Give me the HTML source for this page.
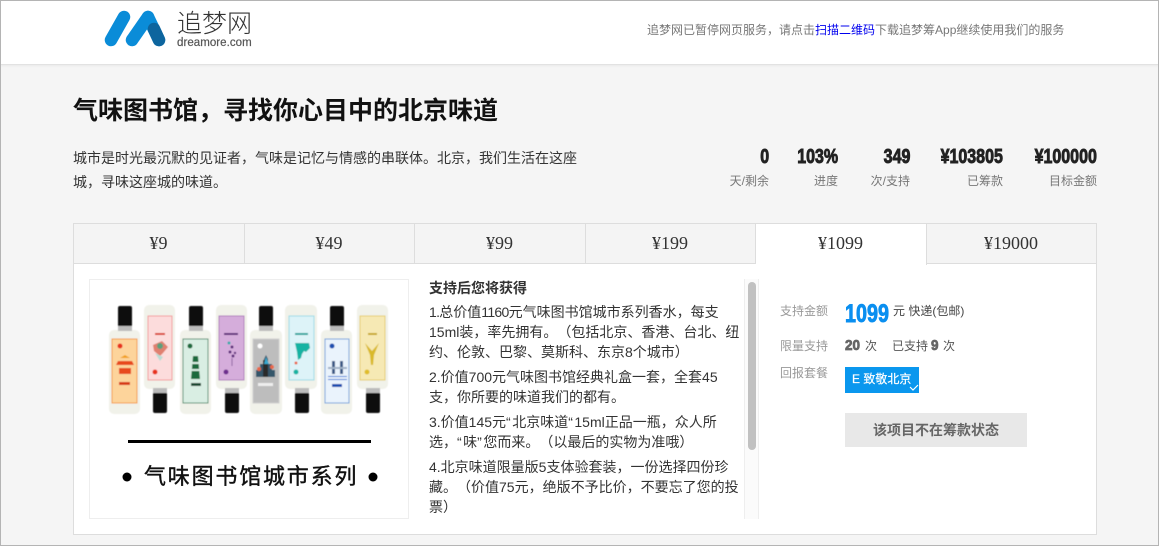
<!DOCTYPE html>
<html lang="zh">
<head>
<meta charset="utf-8">
<style>
*{box-sizing:border-box;margin:0;padding:0}
html,body{width:1159px;height:546px;overflow:hidden;background:#f5f5f5}
body{position:relative;font-family:"Liberation Sans","Noto Sans CJK SC",sans-serif;color:#333;text-spacing-trim:space-all}
.a{position:absolute;white-space:nowrap}
.frame{position:absolute;left:0;top:0;width:1159px;height:546px;border:1px solid #b4b4b4;pointer-events:none;z-index:9}
.head{position:absolute;left:0;top:0;width:1159px;height:65px;background:#fff;border-bottom:1px solid #e2e2e2;box-shadow:0 1px 2px rgba(0,0,0,.05)}
.num{font-family:"Liberation Sans",sans-serif;font-weight:700;font-size:20px;color:#222;-webkit-text-stroke:.9px #222;line-height:20px;text-align:right;transform:scaleX(.8);transform-origin:right center}
.lab{font-size:12px;color:#777;line-height:18px;text-align:right}
.tab{position:absolute;top:223px;height:41px;background:#f4f4f4;border:1px solid #ddd;border-left:0;font-family:"Liberation Serif",serif;font-size:18px;color:#333;text-align:center;line-height:39px;padding-right:1px}
.ln{position:absolute;left:429px;font-size:14px;line-height:20px;color:#333;white-space:nowrap}
.ln i{font-style:normal;letter-spacing:-.7px}
.ln b{font-weight:400;letter-spacing:1.500px}
.k{font-size:12px;color:#999;line-height:16px}
.v{font-size:12px;color:#555;line-height:16px}
.imp{display:inline-block;font-weight:700;-webkit-text-stroke:.8px #666;color:#666;font-size:15px;transform:scaleX(.9);transform-origin:left center;line-height:14px}
</style>
</head>
<body>
<div class="head"></div>
<svg class="a" style="left:100px;top:6px" width="70" height="46" viewBox="100 6 70 46">
<g fill="none" stroke-linecap="round" stroke-width="12.500">
<path d="M124 17L111 40" stroke="#0a8cd8"/>
<path d="M148 17L132 40" stroke="#0a8cd8"/>
<path d="M148 17L159 40" stroke="#0a8cd8"/>
<path d="M154 29L159 40" stroke="#0d659e"/>
</g>
</svg>
<div class="a" style="left:177px;top:9px;font-size:25px;line-height:30px;color:#333;font-weight:300">追梦网</div>
<div class="a" style="left:177px;top:36px;font-size:11.500px;line-height:14px;color:#555;letter-spacing:.05px;-webkit-text-stroke:.2px #555">dreamore.com</div>
<div class="a" style="left:647px;top:21px;font-size:12px;line-height:18px;color:#777">追梦网已暂停网页服务，请点击<span style="color:#0000ee">扫描二维码</span>下载追梦筹App继续使用我们的服务</div>

<div class="a" style="left:73px;top:94px;font-size:25px;line-height:34px;font-weight:700;color:#111">气味图书馆，寻找你心目中的北京味道</div>
<div class="a" style="left:73px;top:146px;font-size:14px;line-height:24px;color:#333">城市是时光最沉默的见证者，气味是记忆与情感的串联体。北京，我们生活在这座<br>城，寻味这座城的味道。</div>

<div class="a num" style="right:390px;top:147px">0</div>
<div class="a lab" style="right:390px;top:172px">天/剩余</div>
<div class="a num" style="right:321px;top:147px">103%</div>
<div class="a lab" style="right:321px;top:172px">进度</div>
<div class="a num" style="right:249px;top:147px">349</div>
<div class="a lab" style="right:249px;top:172px">次/支持</div>
<div class="a num" style="right:156px;top:147px">¥103805</div>
<div class="a lab" style="right:156px;top:172px">已筹款</div>
<div class="a num" style="right:62px;top:147px">¥100000</div>
<div class="a lab" style="right:62px;top:172px">目标金额</div>

<div class="a" style="left:73px;top:263px;width:1024px;height:272px;background:#fff;border:1px solid #ddd"></div>
<div class="tab" style="left:73px;width:172px;border-left:1px solid #ddd">¥9</div>
<div class="tab" style="left:245px;width:170px">¥49</div>
<div class="tab" style="left:415px;width:171px">¥99</div>
<div class="tab" style="left:586px;width:170px">¥199</div>
<div class="tab" style="left:756px;width:171px;background:#fff;border-bottom:0;height:42px">¥1099</div>
<div class="tab" style="left:927px;width:170px">¥19000</div>

<div class="a" style="left:89px;top:279px;width:320px;height:240px;background:#fff;border:1px solid #eee"></div>
<svg class="a" style="left:89px;top:279px" width="320" height="240" viewBox="89 279 320 240">
<defs><filter id="b" x="-5%" y="-5%" width="110%" height="110%"><feGaussianBlur stdDeviation=".45"/></filter></defs>
<g filter="url(#b)">
<!-- bottle 1 up -->
<g>
<rect x="109" y="330" width="31" height="84" rx="5" fill="#f1f2ea"/><rect x="118" y="306" width="14" height="24" rx="2" fill="#111"/><rect x="118" y="326" width="14" height="5" fill="#bbb"/>
<rect x="112" y="339" width="25" height="64" fill="#fdd49b" stroke="#f59b3e"/>
<circle cx="120" cy="346" r="2.500" fill="#e8301c"/>
<path d="M118 361h14l2 4h-18zM119 368h12v6h-12z" fill="#e8481e"/><path d="M120 358l5-3 5 3z" fill="#f2a01d"/>
<rect x="119" y="382" width="11" height="3" fill="#d73a15"/>
</g>
<!-- bottle 2 down -->
<g>
<rect x="144" y="305" width="31" height="84" rx="5" fill="#f1f2ea"/><rect x="153" y="392" width="14" height="21" rx="2" fill="#111"/><rect x="153" y="388" width="14" height="5" fill="#bbb"/>
<rect x="148" y="316" width="24" height="64" fill="#fcdcdc" stroke="#f39a9a"/>
<rect x="155" y="333" width="10" height="2" fill="#d9402c"/>
<path d="M153 345l9-4 6 6-5 6-3 3-6-5z" fill="#e0806f"/><path d="M155 353l8 4-3 4z" fill="#b9dcd4"/><circle cx="160" cy="346" r="3" fill="#5c9f7d"/>
<circle cx="155" cy="372" r="2.500" fill="#e8301c"/>
</g>
<!-- bottle 3 up -->
<g>
<rect x="180" y="330" width="31" height="84" rx="5" fill="#f1f2ea"/><rect x="189" y="306" width="14" height="24" rx="2" fill="#111"/><rect x="189" y="326" width="14" height="5" fill="#bbb"/>
<rect x="183" y="339" width="25" height="64" fill="#d9eee3" stroke="#4f8f6e"/>
<circle cx="190" cy="346" r="2.500" fill="#1f6a3d"/>
<path d="M193 356h5l2 23h-9z" fill="#1f6a3d"/><rect x="191" y="362" width="9" height="2" fill="#d9eee3"/><rect x="191" y="369" width="9" height="2" fill="#d9eee3"/>
<rect x="191" y="383" width="10" height="3" fill="#1f4a30"/>
</g>
<!-- bottle 4 down -->
<g>
<rect x="216" y="305" width="31" height="84" rx="5" fill="#f1f2ea"/><rect x="225" y="392" width="14" height="21" rx="2" fill="#111"/><rect x="225" y="388" width="14" height="5" fill="#bbb"/>
<rect x="219" y="316" width="25" height="64" fill="#d5addb" stroke="#b07bbd"/>
<rect x="224" y="333" width="14" height="2" fill="#5d2a7a"/>
<circle cx="229" cy="343" r="1.500" fill="#3aa"/><circle cx="232" cy="347" r="1.500" fill="#5d2a7a"/><circle cx="230" cy="352" r="1.500" fill="#5d2a7a"/><circle cx="233" cy="356" r="1.500" fill="#5d2a7a"/><circle cx="235" cy="353" r="1.200" fill="#5d2a7a"/><rect x="231.500" y="358" width="1" height="8" fill="#8a5da0"/>
<circle cx="226" cy="372" r="2.500" fill="#6d2f8e"/>
</g>
<!-- bottle 5 up -->
<g>
<rect x="250" y="330" width="32" height="84" rx="5" fill="#f1f2ea"/><rect x="259" y="306" width="14" height="24" rx="2" fill="#111"/><rect x="259" y="326" width="14" height="5" fill="#bbb"/>
<rect x="253" y="339" width="26" height="64" fill="#bdbdbd" stroke="#cfcfcf"/>
<circle cx="260" cy="346" r="2.500" fill="#fff"/>
<path d="M256 370h4v-6h4v-5l2-4 2 4v5h4v6h3v7h-19z" fill="#35566a"/><rect x="263" y="360" width="5" height="17" fill="#2a2a2a"/><path d="M264 364l2-7 3 7z" fill="#38a8d0"/><circle cx="259" cy="369" r="2" fill="#e9674a"/><circle cx="272" cy="367" r="2" fill="#e9674a"/>
<rect x="258" y="383" width="15" height="3" fill="#eee"/>
</g>
<!-- bottle 6 down -->
<g>
<rect x="285" y="305" width="32" height="84" rx="5" fill="#f1f2ea"/><rect x="295" y="392" width="14" height="21" rx="2" fill="#111"/><rect x="295" y="388" width="14" height="5" fill="#bbb"/>
<rect x="289" y="316" width="25" height="64" fill="#ddf3f8" stroke="#9adbe6"/>
<rect x="295" y="333" width="13" height="2" fill="#1aa59c"/>
<path d="M295 343h14l1 5-4 4-2-1-2 3-1 4-3 2-1-8z" fill="#19b3a3"/><circle cx="296" cy="363" r="1.500" fill="#e9674a"/>
<circle cx="296" cy="372" r="2.500" fill="#19b3a3"/>
</g>
<!-- bottle 7 up -->
<g>
<rect x="321" y="330" width="31" height="84" rx="5" fill="#f1f2ea"/><rect x="330" y="306" width="14" height="24" rx="2" fill="#111"/><rect x="330" y="326" width="14" height="5" fill="#bbb"/>
<rect x="325" y="339" width="24" height="64" fill="#eaf3fc" stroke="#6ea2dc"/>
<circle cx="332" cy="346" r="2.500" fill="#1b4fb0"/>
<rect x="332" y="361" width="3" height="13" fill="#3c5a86"/><rect x="340" y="361" width="3" height="13" fill="#3c5a86"/><rect x="328" y="367" width="19" height="2" fill="#9fb0c6"/>
<path d="M328 376h19v1h-19zM328 379h19v1h-19z" fill="#2a78d6"/>
<rect x="332" y="384" width="10" height="3" fill="#1b4fb0"/>
</g>
<!-- bottle 8 down -->
<g>
<rect x="357" y="305" width="31" height="84" rx="5" fill="#f1f2ea"/><rect x="366" y="392" width="14" height="21" rx="2" fill="#111"/><rect x="366" y="388" width="14" height="5" fill="#bbb"/>
<rect x="360" y="316" width="25" height="64" fill="#f6e9b4" stroke="#e6cd6b"/>
<rect x="368" y="333" width="9" height="2" fill="#c8a820"/>
<path d="M365 343l7 8 7-8-5 12-1 10h-2l-1-10z" fill="#d9b92c"/>
<circle cx="367" cy="372" r="2.500" fill="#e0bd2c"/>
</g>
</g>
<rect x="128" y="440" width="243" height="3" fill="#000"/>
<circle cx="127" cy="477" r="4.500" fill="#000"/>
<circle cx="373" cy="477" r="4.500" fill="#000"/>
</svg>
<div class="a" style="left:144px;top:462px;font-size:22px;line-height:30px;color:#111;letter-spacing:1.800px;-webkit-text-stroke:.4px #111">气味图书馆城市系列</div>

<div class="ln" style="top:278px;font-weight:700">支持后您将获得</div>
<div class="ln" style="top:302px"><i>1.</i>总价值<i>1160</i>元气味图书馆城市系列香水，每支</div>
<div class="ln" style="top:322px">15ml装，率先拥有。（包括北京、香港、台北、纽</div>
<div class="ln" style="top:342px">约、伦敦、巴黎、莫斯科、东京8个城市）</div>
<div class="ln" style="top:367px">2.价值700元气味图书馆经典礼盒一套，全套45</div>
<div class="ln" style="top:387px">支，你所要的味道我们的都有。</div>
<div class="ln" style="top:412px">3.价值145元<b>“</b>北京味道<b>“</b>15ml正品一瓶，众人所</div>
<div class="ln" style="top:432px">选，<b>“</b>味<b>”</b>您而来。（以最后的实物为准哦）</div>
<div class="ln" style="top:457px">4.北京味道限量版5支体验套装，一份选择四份珍</div>
<div class="ln" style="top:477px">藏。（价值75元，绝版不予比价，不要忘了您的投</div>
<div class="ln" style="top:497px">票）</div>

<div class="a" style="left:744px;top:279px;width:15px;height:240px;background:#fbfbfb;border-left:1px solid #eee;border-right:1px solid #eee"></div>
<div class="a" style="left:748px;top:282px;width:8px;height:168px;background:#c1c1c1;border-radius:4px"></div>

<div class="a k" style="left:780px;top:303px">支持金额</div>
<div class="a" style="left:845px;top:300px;font-size:25px;line-height:28px;font-weight:700;color:#0a8ff0;-webkit-text-stroke:.9px #0a8ff0;transform:scaleX(.79);transform-origin:left center">1099</div>
<div class="a v" style="left:893px;top:303px;color:#444;font-size:12px">元 快递(包邮)</div>
<div class="a k" style="left:780px;top:338px">限量支持</div>
<div class="a v" style="left:845px;top:338px"><span class="imp">20</span> 次</div>
<div class="a v" style="left:892px;top:338px">已支持 <span class="imp">9</span> 次</div>
<div class="a k" style="left:780px;top:365px">回报套餐</div>
<div class="a" style="left:845px;top:367px;width:74px;height:26px;background:#0a97ee;color:#fff;font-size:12px;line-height:24px;padding-left:7px;-webkit-text-stroke:.2px #fff">E 致敬北京</div>
<svg class="a" style="left:909px;top:383px" width="10" height="10" viewBox="0 0 10 10"><path d="M1 4l3 3 5-5" fill="none" stroke="#fff" stroke-width="1.200"/></svg>
<div class="a" style="left:845px;top:413px;width:182px;height:34px;background:#e8e8e8;color:#666;font-size:14px;font-weight:700;line-height:34px;text-align:center">该项目不在筹款状态</div>

<div class="frame"></div>
</body>
</html>
